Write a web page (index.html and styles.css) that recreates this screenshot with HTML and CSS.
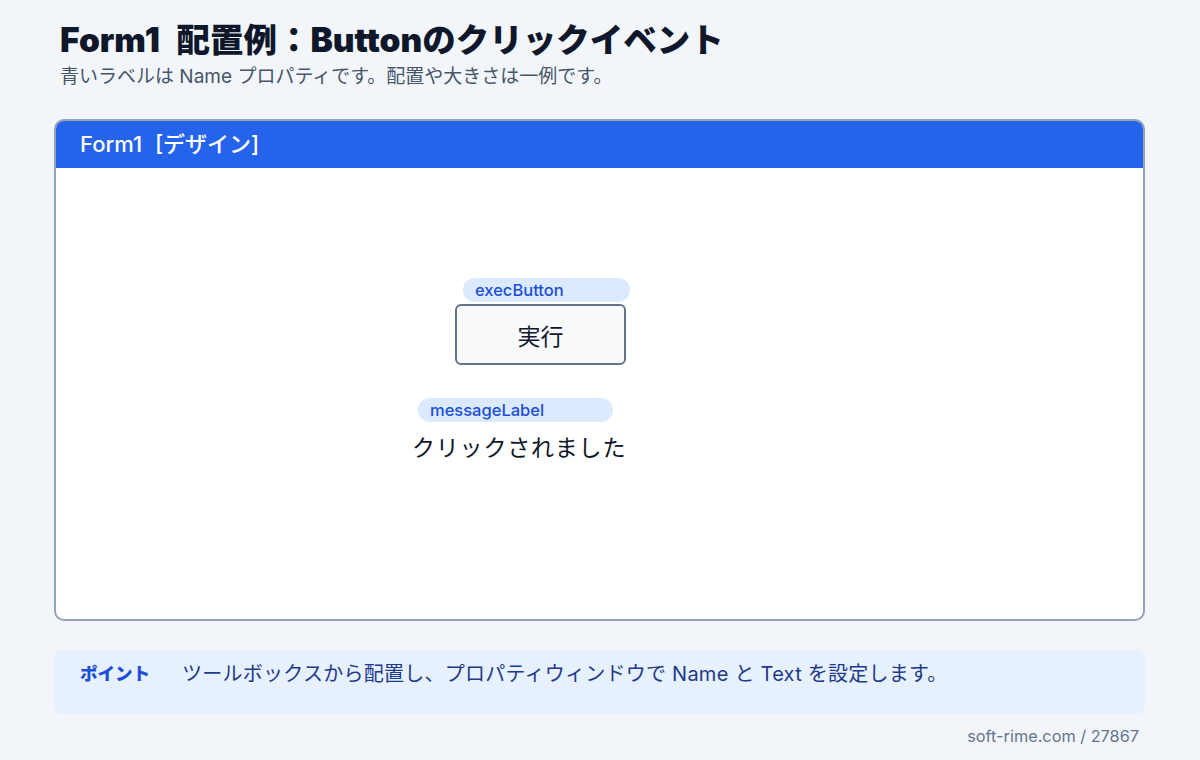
FILE: index.html
```html
<!DOCTYPE html>
<html lang="ja">
<head>
<meta charset="utf-8">
<title>Form1 配置例</title>
<link rel="stylesheet" href="styles.css">
</head>
<body>
<div class="page">
  <header class="intro">
    <h1 class="title">Form1 配置例：Buttonのクリックイベント</h1>
    <p class="subtitle">青いラベルは Name プロパティです。配置や大きさは一例です。</p>
  </header>

  <section class="form-window">
    <div class="form-caption">Form1 [デザイン]</div>
    <div class="form-canvas">
      <span class="name-tag tag-button">execButton</span>
      <div class="ctl-button">実行</div>
      <span class="name-tag tag-label">messageLabel</span>
      <div class="ctl-label">クリックされました</div>
    </div>
  </section>

  <aside class="point">
    <span class="point-head">ポイント</span>
    <span class="point-text">ツールボックスから配置し、プロパティウィンドウで Name と Text を設定します。</span>
  </aside>

  <footer class="credit">soft-rime.com / 27867</footer>
</div>
</body>
</html>
```

FILE: styles.css
```css
* { box-sizing: border-box; }

html, body {
  margin: 0;
  padding: 0;
}

body {
  width: 1200px;
  height: 760px;
  background: #f2f6fb;
  font-family: "Inter", "Noto Sans CJK JP", sans-serif;
  color: #0f172a;
  overflow: hidden;
}

.page {
  padding: 18px 55px 0 54px;
  display: flex;
  flex-direction: column;
}

.intro {
  padding-left: 6px;
}

.title {
  margin: 0;
  font-size: 33.5px;
  line-height: 44px;
  font-weight: 900;
  word-spacing: 10px;
  color: #0f172a;
}

.subtitle {
  margin: 1px 0 0;
  font-size: 19px;
  line-height: 28px;
  color: #475569;
}

.form-window {
  margin-top: 28px;
  height: 502px;
  border: 2px solid #94a3b8;
  border-radius: 10px;
  background: #ffffff;
  overflow: hidden;
  display: flex;
  flex-direction: column;
}

.form-caption {
  height: 47px;
  background: #2563eb;
  color: #ffffff;
  font-size: 22px;
  line-height: 47px;
  padding-left: 24px;
  font-weight: 500;
  word-spacing: 7px;
}

.form-canvas {
  position: relative;
  flex: 1;
}

/* controls sit at their designer coordinates inside the canvas */
.name-tag {
  position: absolute;
  height: 24px;
  line-height: 24px;
  border-radius: 12px;
  background: #dbeafe;
  color: #1d4ed8;
  font-size: 16.5px;
  padding-left: 12px;
  font-weight: 500;
}

.tag-button {
  left: 407px;
  top: 110px;
  width: 167px;
}

.tag-label {
  left: 362px;
  top: 230px;
  width: 195px;
}

.ctl-button {
  position: absolute;
  left: 399px;
  top: 136px;
  width: 171px;
  height: 61px;
  border: 2px solid #64748b;
  border-radius: 6px;
  background: #f8fafc;
  font-size: 23px;
  display: flex;
  align-items: center;
  justify-content: center;
  color: #0f172a;
}

.ctl-label {
  position: absolute;
  left: 356px;
  top: 264px;
  font-size: 23px;
  letter-spacing: 0.8px;
  line-height: 32px;
  color: #0f172a;
}

.point {
  margin-top: 29px;
  height: 64px;
  background: #e7f0fd;
  border-radius: 8px;
  padding: 9px 0 0 26px;
  display: flex;
  align-items: flex-start;
  gap: 32px;
}

.point-head {
  font-size: 17.5px;
  line-height: 30px;
  font-weight: 900;
  color: #1d4ed8;
}

.point-text {
  font-size: 20px;
  letter-spacing: 0.25px;
  line-height: 30px;
  color: #1e3a8a;
}

.credit {
  margin-top: 10px;
  text-align: right;
  padding-right: 6px;
  font-size: 16.3px;
  line-height: 24px;
  color: #64748b;
}
```
